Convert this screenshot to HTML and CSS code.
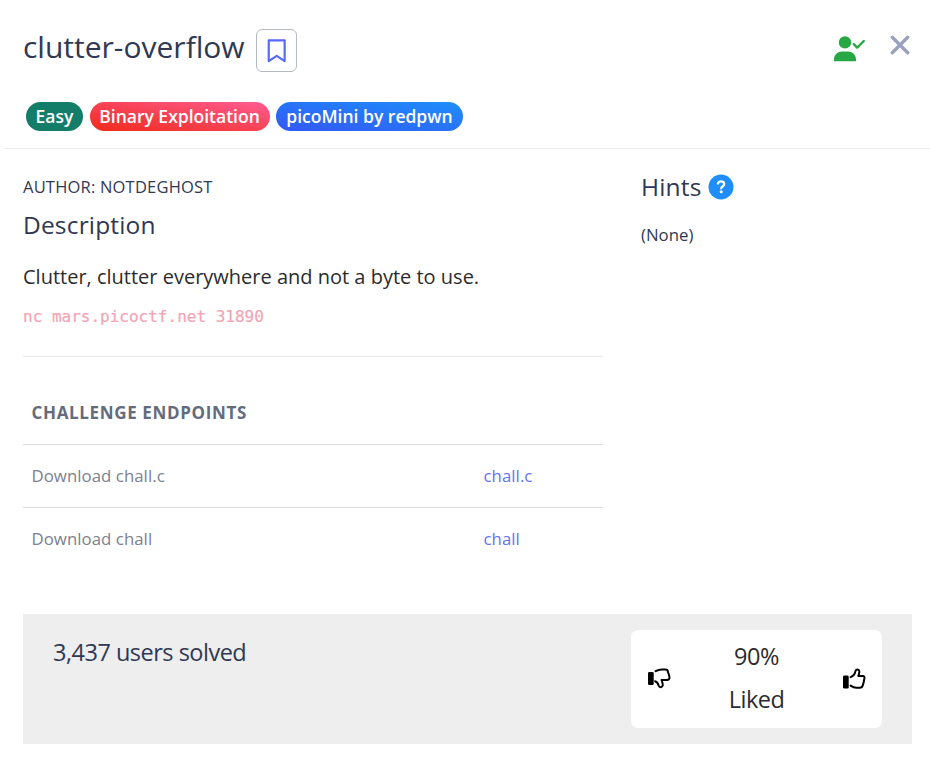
FILE: index.html
```html
<!DOCTYPE html>
<html lang="en">
<head>
<meta charset="utf-8">
<title>clutter-overflow</title>
<link rel="stylesheet" href="styles.css">
</head>
<body>
<main class="modal">
  <header class="header">
    <div class="title-row">
      <h1 class="title">clutter-overflow</h1>
      <button class="bookmark" aria-label="Bookmark">
        <svg width="24" height="24" viewBox="0 0 16 16"><path fill="none" stroke="currentColor" stroke-width="1.450" stroke-linejoin="round" d="M2.500 .9h10.600v13.800L7.800 11.300 2.500 14.700z"/></svg>
      </button>
      <svg class="solved-icon" width="32" height="32" viewBox="0 0 16 16" fill="currentColor"><path d="M9.900 6.100l1.700 1.700 3.300-3.300" fill="none" stroke="currentColor" stroke-width="1.200" stroke-linecap="round" stroke-linejoin="round"/><path d="M0 14.600v-.8c0-2.200 1.500-4.100 4-4.100h3c2.500 0 4 1.900 4 4.100v.8zM5.500 8.300a3.100 3.100 0 1 0 0-6.200 3.100 3.100 0 0 0 0 6.200z"/></svg>
      <button class="close" aria-label="Close">
        <svg width="20" height="20" viewBox="0 0 20 20"><path d="M2.300 2.300l15.400 15.400M17.700 2.300L2.300 17.700" stroke="currentColor" stroke-width="3.400" stroke-linecap="round"/></svg>
      </button>
    </div>
    <div class="tags">
      <span class="tag tag-easy">Easy</span>
      <span class="tag tag-category">Binary Exploitation</span>
      <span class="tag tag-event">picoMini by redpwn</span>
    </div>
  </header>
  <div class="content">
    <section class="details">
      <p class="author">AUTHOR: NOTDEGHOST</p>
      <h2 class="heading">Description</h2>
      <p class="description">Clutter, clutter everywhere and not a byte to use.</p>
      <code class="command">nc mars.picoctf.net 31890</code>
      <div class="endpoints">
        <h3 class="endpoints-title">CHALLENGE ENDPOINTS</h3>
        <div class="endpoint"><span>Download chall.c</span><a class="link">chall.c</a></div>
        <div class="endpoint"><span>Download chall</span><a class="link">chall</a></div>
      </div>
    </section>
    <aside class="hints">
      <div class="hints-row">
        <h2 class="heading hints-title">Hints</h2>
        <svg class="help" width="26" height="26" viewBox="0 0 26 26"><circle cx="13" cy="13" r="12.500" fill="#1f8efa"/><path d="M9.900 9.600c.5-1.500 1.600-2.200 3.100-2.200 1.900 0 3.200 1 3.200 2.600 0 2.300-3 2.200-3 4.400" fill="none" stroke="#fff" stroke-width="2.200" stroke-linecap="round"/><circle cx="13.200" cy="17.800" r="1.500" fill="#fff"/></svg>
      </div>
      <p class="no-hints">(None)</p>
    </aside>
  </div>
  <footer class="footer">
    <div class="solved">3,437 users solved</div>
    <div class="rating">
      <svg class="thumb" width="24" height="24" viewBox="0 0 24 24"><rect x="1" y="5" width="5.700" height="13" rx="1.300"/><path d="M8.600 4.200c2.200-1.200 4-1.800 6-1.800h3.800c1.700 0 2.500.8 2.500 2.400.9 2 1.500 4 1.600 6 0 1.600-.9 2.100-2.400 2.100h-5.600c.7 1.900 1.500 3.800 1.300 5.300-.3 2.600-3.400 2.700-4.200.3-.5-2-1.300-3.500-3.500-4.300" fill="none" stroke="currentColor" stroke-width="2" stroke-linecap="round" stroke-linejoin="round"/></svg>
      <div class="rating-text"><span>90%</span><span>Liked</span></div>
      <svg class="thumb" width="24" height="24" viewBox="0 0 24 24"><rect x="1" y="8.500" width="5.700" height="13" rx="1.300"/><path d="M8.600 10.100c2.800-1 4.200-2.800 4.700-5.600.4-2.700 3.700-2.800 4-.3.200 1.600-.5 3.100-.9 4.800h4.300c1.500 0 2.100 1 1.700 2.500-.4 2.500-.9 4.800-1.700 7.100-.4 1.700-1.200 2.200-2.800 2.200h-3.500c-2 0-3.800-.8-5.800-2.200" fill="none" stroke="currentColor" stroke-width="2" stroke-linecap="round" stroke-linejoin="round"/></svg>
    </div>
  </footer>
</main>
</body>
</html>
```
FILE: styles.css
```css
* { box-sizing: border-box; }
body { margin: 0; background: #fff; color: #303853; font-family: "Open Sans", "Noto Sans", sans-serif; }
h1, h2, h3, p { margin: 0; font-weight: 400; }
svg { display: block; flex: none; }
button { padding: 0; background: none; }
.modal { width: 930px; height: 767px; overflow: hidden; }
.header { height: 149px; margin-left: 4px; padding: 29px 20px 0 19px; border-bottom: 1px solid #ededef; }
.title-row { display: flex; height: 43px; }
.title { width: 221px; font-size: 30px; line-height: 36px; white-space: nowrap; }
.bookmark { display: flex; align-items: center; justify-content: center; width: 41px; height: 43px; margin-left: 12px; border: 1px solid #b5bac3; border-radius: 6px; color: #5868f7; }
.solved-icon { margin: 3px 0 0 auto; color: #28a745; }
.close { width: 20px; height: 20px; margin: 6px 0 0 24px; border: 0; color: #9aa2bd; }
.tags { display: flex; gap: 6.500px; padding: 30px 0 0 3px; }
.tag { height: 29px; border-radius: 15px; color: #fff; font-size: 17.500px; font-weight: 600; line-height: 29px; text-align: center; white-space: nowrap; }
.tag-easy { width: 57px; background: #147d69; }
.tag-category { width: 180px; background: linear-gradient(to top right, #f02a19, #ff5c93); }
.tag-event { width: 187px; background: linear-gradient(to top right, #3357f5, #1e8ffa); }
.content { display: flex; height: 465px; padding-left: 23px; }
.details { width: 580px; }
.author { padding-top: 26px; font-size: 16.500px; letter-spacing: .2px; line-height: 24px; }
.heading { margin-top: 10px; font-size: 24.500px; letter-spacing: .17px; line-height: 32px; }
.description { margin-top: 20px; color: #2c2c2c; font-size: 20px; line-height: 32px; }
.command { display: block; margin-top: 12px; color: #f3a4b5; font: 16px/24px "DejaVu Sans Mono", monospace; -webkit-text-stroke: .2px; white-space: nowrap; }
.endpoints { margin-top: 27px; border-top: 1px solid #e9e9eb; }
.endpoints-title { height: 87px; padding: 43px 0 0 8.500px; color: #646b7d; font-size: 17px; font-weight: 700; letter-spacing: .65px; line-height: 26px; }
.endpoint { display: grid; grid-template-columns: 452px 1fr; height: 63px; padding: 0 0 0 8.500px; border-top: 1px solid #d8d9db; color: #7c808f; font-size: 16.800px; letter-spacing: .05px; line-height: 61px; }
.link { color: #6473f3; }
.hints { margin-left: 38px; padding-top: 22px; }
.hints-row { display: flex; gap: 6px; }
.hints-title { margin: 0; }
.help { margin-top: 3px; }
.no-hints { margin-top: 20px; font-size: 16.800px; line-height: 24px; }
.footer { display: flex; width: 889px; height: 130px; margin-left: 23px; padding: 16px 30px; justify-content: space-between; background: #eee; }
.solved { font-size: 23.500px; letter-spacing: -.5px; line-height: 44px; }
.rating { display: flex; justify-content: space-between; align-items: flex-start; width: 251px; height: 98px; padding: 5px 16px; border-radius: 7px; background: #fff; color: #000; }
.rating-text { display: flex; flex-direction: column; align-items: center; color: #2c2c2c; font-size: 23.500px; letter-spacing: -.5px; line-height: 43px; }
.thumb { margin-top: 32px; }
```
